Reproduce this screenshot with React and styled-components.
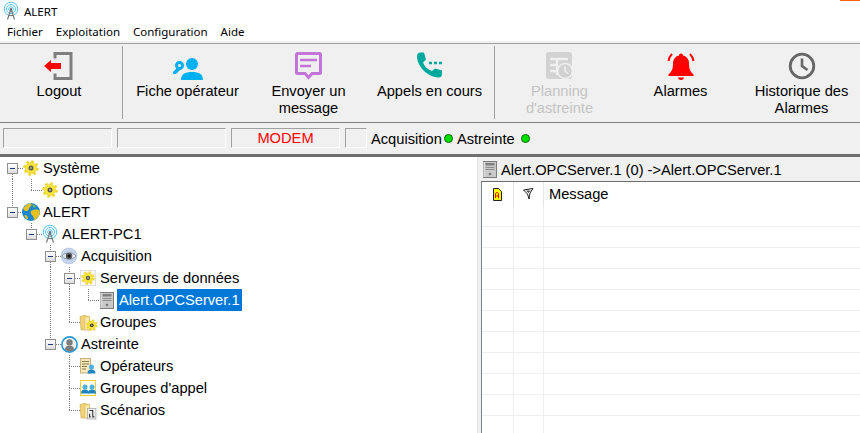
import React from 'react';
import styled, { createGlobalStyle } from 'styled-components';

const Global = createGlobalStyle`
  html, body {
    margin: 0;
    padding: 0;
    background: #fff;
  }
  * {
    box-sizing: border-box;
  }
`;

const Win = styled.div`
  width: 860px;
  height: 433px;
  overflow: hidden;
  display: flex;
  flex-direction: column;
  font-family: "Liberation Sans", Arial, sans-serif;
  font-size: 14.67px;
  color: #000;
  background: #fff;
`;

const TitleBar = styled.div`
  height: 22px;
  display: flex;
  align-items: center;
  padding-left: 3px;
  font-family: "Noto Sans", sans-serif;
  font-size: 11.5px;
`;

const TitleText = styled.span`
  margin-left: 5px;
`;

const CloseEdge = styled.div`
  align-self: flex-start;
  margin-left: auto;
  width: 20px;
  height: 1px;
  background: #f7630c;
`;

const MenuBar = styled.div`
  height: 19px;
  display: flex;
  align-items: center;
  gap: 13px;
  padding-left: 7px;
  font-family: "Noto Sans", sans-serif;
  font-size: 11.5px;
`;

const ToolBar = styled.div`
  height: 80px;
  flex: none;
  margin-top: 2px;
  display: flex;
  align-items: flex-start;
  padding-top: 2px;
  background: #f0f0f0;
  border-top: 1px solid #a0a0a0;
  border-bottom: 1px solid #808080;
  box-shadow: 0 -2px 0 #f0f0f0;
`;

const ToolButton = styled.div`
  flex: none;
  width: ${({ $w }) => $w || 121}px;
  padding-top: 6px;
  display: flex;
  flex-direction: column;
  align-items: center;
  text-align: center;
  line-height: 17px;
  color: ${({ $off }) => ($off ? '#c4c4c4' : '#000')};
`;

const ToolIcon = styled.div`
  height: 31px;
  width: 32px;
`;

const ToolSep = styled.div`
  flex: none;
  width: 1px;
  height: 73px;
  margin: 0 4px;
  background: #a0a0a0;
`;

const StatusBar = styled.div`
  height: 34px;
  flex: none;
  display: flex;
  align-items: center;
  gap: 5px;
  padding: 0 0 1px 3px;
  background: #f0f0f0;
  border-bottom: 3px solid #6e6e6e;
`;

const StatusBox = styled.div`
  flex: none;
  width: ${({ $w }) => $w || 109}px;
  height: 20px;
  display: flex;
  align-items: center;
  justify-content: center;
  color: #ff0000;
  border: 1px solid;
  border-color: #a0a0a0 #fff #fff #a0a0a0;
`;

const StatusText = styled.span`
  margin-left: ${({ $ml }) => $ml || 0}px;
  padding-top: 1px;
`;

const Led = styled.span`
  flex: none;
  width: 9px;
  height: 9px;
  margin-left: ${({ $ml }) => $ml || 0}px;
  border-radius: 50%;
  background: #00e000;
  border: 1px solid #0a6a0a;
`;

const Main = styled.div`
  flex: 1;
  display: flex;
  min-height: 0;
`;

const Tree = styled.div`
  flex: none;
  width: 477px;
  background: #fff;
`;

const Row = styled.div`
  height: 22px;
  display: flex;
`;

const Guide = styled.div`
  flex: none;
  width: 19px;
  height: 22px;
  ${({ $on }) => $on && `background: repeating-linear-gradient(to bottom, #7a7a7a 0 1px, transparent 1px 2px) 12px 0 / 1px 100% no-repeat;`}
`;

const vertical = 'repeating-linear-gradient(to bottom, #7a7a7a 0 1px, transparent 1px 2px)';
const across = 'repeating-linear-gradient(to right, #7a7a7a 0 1px, transparent 1px 2px) 12px 11px / 11px 1px no-repeat';

const lines = ({ $up, $down }) => {
  const layers = [across];
  if ($up) layers.push(`${vertical} 12px 0 / 1px 11px no-repeat`);
  if ($down) layers.push(`${vertical} 12px 11px / 1px 11px no-repeat`);
  return layers.join(', ');
};

const Link = styled.div`
  flex: none;
  width: 23px;
  height: 22px;
  display: flex;
  align-items: center;
  padding-left: 7px;
  background: ${lines};
`;

const Expander = styled.div`
  width: 11px;
  height: 11px;
  margin-top: 1px;
  display: flex;
  align-items: center;
  justify-content: center;
  border: 1px solid #919191;
  background: linear-gradient(#fff, #dcdcdc);

  &::before {
    content: '';
    width: 5px;
    height: 1px;
    background: #1f3a7a;
  }
`;

const NodeIcon = styled.div`
  flex: none;
  width: 16px;
  height: 22px;
  display: flex;
  align-items: center;
  justify-content: center;
`;

const IconFrame = styled.div`
  flex: none;
  width: 16px;
  height: 16px;
  border: 1px solid #dedede;
  background: #fafafa;
`;

const NodeLabel = styled.div`
  margin-left: 2px;
  padding: 0 2px;
  line-height: 22px;
  background: ${({ $sel }) => ($sel ? '#0078d7' : 'transparent')};
  color: ${({ $sel }) => ($sel ? '#fff' : '#000')};
`;

const Side = styled.div`
  flex: 1;
  display: flex;
  flex-direction: column;
  min-width: 0;
  background: #f0f0f0;
  border-left: 1px solid #e3e3e3;
`;

const SideHead = styled.div`
  height: 24px;
  flex: none;
  display: flex;
  align-items: center;
  gap: 4px;
  padding: 1px 0 0 5px;
  white-space: nowrap;
`;

const Grid = styled.div`
  flex: 1;
  margin-left: 3px;
  background: #fff;
  border-top: 1px solid #6e6e6e;
  border-left: 1px solid #7b8088;
`;

const GridHead = styled.div`
  height: 24px;
  display: flex;
`;

const HeadCell = styled.div`
  flex: ${({ $grow }) => ($grow ? 1 : 'none')};
  width: ${({ $w }) => $w || 0}px;
  height: 24px;
  display: flex;
  align-items: center;
  justify-content: ${({ $grow }) => ($grow ? 'flex-start' : 'center')};
  padding-left: ${({ $grow }) => ($grow ? 5 : 0)}px;
  border-right: ${({ $grow }) => ($grow ? 0 : '1px solid #e4e4e4')};
`;

const GridRow = styled.div`
  height: 21px;
  display: flex;
  border-bottom: 1px solid #eeeeee;
`;

const GridCell = styled.div`
  flex: none;
  width: ${({ $w }) => $w}px;
  border-right: 1px solid #eeeeee;
`;

const Pic = styled.svg`
  display: block;
  flex: none;
  overflow: visible;
`;

const Svg = ({ size = 16, w, h, box, children }) => (
  <Pic width={w || size} height={h || size} viewBox={box || `0 0 ${w || size} ${h || size}`}>
    {children}
  </Pic>
);

const GearShape = ({ hub = '#5f5c50' }) => (
  <>
    <circle cx="8" cy="8" r="5.600" fill="#f8e63a" stroke="#d8bf24" strokeWidth=".5" />
    <circle cx="8" cy="8" r="6.600" fill="none" stroke="#efd52a" strokeWidth="2.400" strokeDasharray="2.600 2.580" />
    <circle cx="8" cy="8" r="2.500" fill={hub} />
    <circle cx="8" cy="8" r="1" fill="#b3b0a2" />
  </>
);

const Antenna = () => (
  <Svg size={16}>
    <g fill="none" stroke="#56c2ea" strokeWidth="1">
      <circle cx="8" cy="6" r="2.300" />
      <circle cx="8" cy="6" r="4.500" />
      <circle cx="8" cy="6" r="6.800" />
    </g>
    <path d="M8 6 4.500 16.500M8 6l3.500 10.500M6 12.500h4" fill="none" stroke="#777" strokeWidth="1.200" />
    <circle cx="8" cy="6" r="1.100" fill="#666" />
  </Svg>
);

const Gear = () => (
  <Svg size={16} box="0 0 16 16">
    <GearShape />
  </Svg>
);

const GearFrame = () => (
  <IconFrame>
    <Svg size={14} box="0 0 16 16">
      <GearShape />
    </Svg>
  </IconFrame>
);

const Globe = () => (
  <Svg size={18} box="0 0 16 16">
    <circle cx="8" cy="8" r="8" fill="#1a86d0" />
    <path d="M1 5c2-3 4-4.500 7-4.800 1 1 .5 2.300-.5 2.800C6 4 6.500 5.500 5.500 6.500 4 8 2 7 1 5zM8 7c2-1 5-2 7.500-.5.500 2 .3 4-.8 5.500-1 .5-1.500 2-3 3-1.500 0-1-2-2-3.500C8.500 10 7 9 8 7zM2 10.500c1.500 0 3 1 3.500 3L4 14.500c-1-1-1.600-2.500-2-4z" fill="#e8c21c" />
    <path d="M9 1c1.500.2 2.500 1 3.500 2l-2 1.200z" fill="#7cc443" />
  </Svg>
);

const Eye = () => (
  <Svg size={16} box="0 0 16 16">
    <circle cx="8" cy="8" r="8" fill="#c3d3ec" stroke="#a6b9d8" strokeWidth=".5" />
    <path d="M1 8c3-4.200 11-4.200 14 0-3 4.200-11 4.200-14 0z" fill="#e9ecf2" stroke="#70798a" strokeWidth=".7" />
    <circle cx="8" cy="8" r="3.300" fill="#5b5d62" />
    <circle cx="8" cy="8" r="1.500" fill="#111" />
  </Svg>
);

const ServerBox = () => (
  <Svg w={14} h={17} box="0 0 14 17">
    <rect x=".5" y=".5" width="13" height="16" fill="#c9c9c9" stroke="#7c7c7c" />
    <rect x="2.500" y="2" width="9" height="2.500" fill="#808080" />
    <path d="M2.500 6.500h9M2.500 8.500h9" stroke="#8d8d8d" />
    <circle cx="7" cy="13" r="1.300" fill="#7a7a7a" />
    <path d="M1 1v15" stroke="#eeeeee" />
  </Svg>
);

const FolderGear = () => (
  <Svg size={17} box="0 0 16 16">
    <path d="M0 2.500 5 1l1 1h2l1 2v11H1z" fill="#f1d277" stroke="#c9a74a" strokeWidth=".6" />
    <path d="M4.500 3.500 9 2v13H4.500z" fill="#fbeaa8" stroke="#d3b257" strokeWidth=".5" />
    <g transform="translate(5.500 5) scale(.7)">
      <GearShape hub="#3d3d3d" />
    </g>
  </Svg>
);

const UserCircle = () => (
  <Svg size={17} box="0 0 16 16">
    <circle cx="8" cy="8" r="7.200" fill="#f2f2f2" stroke="#2a9ad6" strokeWidth="1.500" />
    <circle cx="8" cy="6" r="3" fill="#7e7e7e" />
    <path d="M3.500 13c.5-3 2-4 4.500-4s4 1 4.500 4a7 7 0 0 1-9 0z" fill="#7e7e7e" />
  </Svg>
);

const Person = ({ x, y }) => (
  <g transform={`translate(${x} ${y})`}>
    <circle cx="4" cy="2.500" r="2.500" fill="#4db1e6" />
    <path d="M0 9c0-3 1.500-4 4-4s4 1 4 4z" fill="#1d84c4" />
  </g>
);

const Operators = () => (
  <Svg size={16} box="0 0 16 16">
    <rect x=".5" y=".5" width="10" height="14.500" fill="#f5e8bd" stroke="#c8b27a" />
    <path d="M2 3.500h7M2 6h7M2 8.500h5M2 11h4" stroke="#8a7b4d" />
    <Person x="7.500" y="6.500" />
  </Svg>
);

const CallGroup = () => (
  <Svg size={16} box="0 0 16 16">
    <rect x=".5" y=".5" width="15" height="15" fill="#fffbe6" stroke="#e5cf3a" />
    <Person x="1" y="4.500" />
    <Person x="8" y="4.500" />
  </Svg>
);

const ScenarioFolder = () => (
  <Svg size={17} box="0 0 16 16">
    <path d="M0 2.500 5 1l1 1h2l1 2v11H1z" fill="#f1d277" stroke="#c9a74a" strokeWidth=".6" />
    <path d="M4.500 3.500 9 2v13H4.500z" fill="#fbeaa8" stroke="#d3b257" strokeWidth=".5" />
    <rect x="7" y="6" width="8" height="10" fill="#eeeeee" stroke="#9a9a9a" strokeWidth=".6" />
    <path d="M9 8h3v3M9 11v3h1M12 11v3h1.500" fill="none" stroke="#333" strokeWidth="1" />
  </Svg>
);

const Logout = () => (
  <Svg w={32} h={31} box="43 52 32 31">
    <path d="M55 58.500v-5h16v25H55v-5" fill="none" stroke="#7f7f7f" strokeWidth="3" />
    <path d="M44 66l7-6v3h10v6H51v3z" fill="#ff0000" />
  </Svg>
);

const UserKey = () => (
  <Svg w={32} h={31} box="171 52 32 31">
    <circle cx="191" cy="64" r="6" fill="#00b0f0" />
    <path d="M180 80c0-6 4-8 11-8s11 2 11 8z" fill="#00b0f0" />
    <circle cx="178.500" cy="65.500" r="3" fill="none" stroke="#00b0f0" strokeWidth="3" />
    <path d="M176 68 172 72v2h3l4-4z" fill="#00b0f0" />
  </Svg>
);

const Message = () => (
  <Svg w={32} h={31} box="293 52 32 31">
    <path d="M297.500 53.500h22a1 1 0 0 1 1 1v18a1 1 0 0 1-1 1H312l-3.500 4-3.500-4h-7.500a1 1 0 0 1-1-1v-18a1 1 0 0 1 1-1z" fill="none" stroke="#c274d8" strokeWidth="3" />
    <path d="M300 60h17M300 66h11" stroke="#c274d8" strokeWidth="2.400" />
  </Svg>
);

const Phone = () => (
  <Svg w={32} h={31} box="415 52 32 31">
    <path d="M418 56c0-2 1.500-3.500 3.500-3.500h3.500l2 7-3 3c1.500 4 4.500 7 9 8.500l3-2.500 7 2v4c0 2-1.500 3-3.500 3C428 77 418 66 418 56z" fill="#00a99d" />
    <path d="M430 63h3M435 63h3M440 63h3" stroke="#00a99d" strokeWidth="2.600" />
  </Svg>
);

const Planning = () => (
  <Svg w={32} h={31} box="543 52 32 31">
    <rect x="545" y="52" width="26" height="27" rx="3" fill="#d2d2d2" />
    <path d="M549 59h18M549 65h7M549 71h7M556 59v16" stroke="#f0f0f0" strokeWidth="2.400" />
    <circle cx="564" cy="71" r="7.500" fill="#d2d2d2" stroke="#f0f0f0" strokeWidth="1.600" />
    <path d="M564 66.500V71l3 2.500" fill="none" stroke="#f0f0f0" strokeWidth="1.600" />
  </Svg>
);

const AlarmBell = () => (
  <Svg w={32} h={31} box="665 52 32 31">
    <path d="M681 53.500c1.200 0 2 .8 2 2 4 1 6 4 6 8 0 5 1 8 4.500 11v1.500h-25v-1.500c3.500-3 4.500-6 4.500-11 0-4 2-7 6-8 0-1.200.8-2 2-2z" fill="#ff0000" />
    <path d="M678 77.500h6c0 1.500-1.300 2.500-3 2.500s-3-1-3-2.500z" fill="#ff0000" />
    <path d="M672 54c-2 2-3 4-3.500 7M690 54c2 2 3 4 3.500 7" fill="none" stroke="#ff0000" strokeWidth="2" />
  </Svg>
);

const Clock = () => (
  <Svg w={32} h={31} box="787 52 32 31">
    <circle cx="803" cy="66" r="11.800" fill="none" stroke="#666" strokeWidth="2.800" />
    <path d="M803 58.500V66l5.500 4" fill="none" stroke="#666" strokeWidth="2.600" />
  </Svg>
);

const DocAlert = () => (
  <Svg w={9} h={13} box="0 0 9 13">
    <path d="M.5.500h5l3 3v9h-8z" fill="#ffff00" stroke="#222" />
    <path d="M2.500 10V5.500l1.500-1 1.500 1V10M2.500 8h3" fill="none" stroke="#e00000" />
  </Svg>
);

const Funnel = () => (
  <Svg w={11} h={12} box="0 0 11 12">
    <path d="M.5 2 10 .5 7 5l-1 6-1.500-5z" fill="#fff" stroke="#222" />
    <path d="M3 2.500h4.500L5.500 5z" fill="#444" />
  </Svg>
);

const tools = [
  { label: 'Fiche opérateur', icon: <UserKey /> },
  { label: 'Envoyer un message', icon: <Message /> },
  { label: 'Appels en cours', icon: <Phone /> },
];

const moreTools = [
  { label: "Planning d'astreinte", icon: <Planning />, off: true },
  { label: 'Alarmes', icon: <AlarmBell /> },
  { label: 'Historique des Alarmes', icon: <Clock /> },
];

// guides : une entrée par niveau, true = trait vertical qui continue
const nodes = [
  { label: 'Système', icon: <Gear />, guides: [], open: true, down: true },
  { label: 'Options', icon: <Gear />, guides: [true], up: true },
  { label: 'ALERT', icon: <Globe />, guides: [], open: true, up: true },
  { label: 'ALERT-PC1', icon: <Antenna />, guides: [false], open: true, up: true },
  { label: 'Acquisition', icon: <Eye />, guides: [false, false], open: true, up: true, down: true },
  { label: 'Serveurs de données', icon: <GearFrame />, guides: [false, false, true], open: true, up: true, down: true },
  { label: 'Alert.OPCServer.1', icon: <ServerBox />, guides: [false, false, true, true], up: true, selected: true },
  { label: 'Groupes', icon: <FolderGear />, guides: [false, false, true], up: true },
  { label: 'Astreinte', icon: <UserCircle />, guides: [false, false], open: true, up: true },
  { label: 'Opérateurs', icon: <Operators />, guides: [false, false, false], up: true, down: true },
  { label: "Groupes d'appel", icon: <CallGroup />, guides: [false, false, false], up: true, down: true },
  { label: 'Scénarios', icon: <ScenarioFolder />, guides: [false, false, false], up: true },
];

const ToolItem = ({ tool }) => (
  <ToolButton $off={tool.off}>
    <ToolIcon>{tool.icon}</ToolIcon>
    {tool.label}
  </ToolButton>
);

const App = () => {
  return (
    <Win>
      <Global />
      <TitleBar>
        <Antenna />
        <TitleText>ALERT</TitleText>
        <CloseEdge />
      </TitleBar>
      <MenuBar>
        <span>Fichier</span>
        <span>Exploitation</span>
        <span>Configuration</span>
        <span>Aide</span>
      </MenuBar>
      <ToolBar>
        <ToolButton $w={118}>
          <ToolIcon><Logout /></ToolIcon>
          Logout
        </ToolButton>
        <ToolSep />
        {tools.map(tool => <ToolItem key={tool.label} tool={tool} />)}
        <ToolSep />
        {moreTools.map(tool => <ToolItem key={tool.label} tool={tool} />)}
      </ToolBar>
      <StatusBar>
        <StatusBox />
        <StatusBox />
        <StatusBox>MODEM</StatusBox>
        <StatusBox $w={22} />
        <StatusText $ml={-1}>Acquisition</StatusText>
        <Led $ml={-3} />
        <StatusText $ml={-1}>Astreinte</StatusText>
        <Led $ml={1} />
      </StatusBar>
      <Main>
        <Tree>
          {nodes.map(node => (
            <Row key={node.label}>
              {node.guides.map((on, i) => <Guide key={i} $on={on} />)}
              <Link $up={node.up} $down={node.down}>
                {node.open && <Expander />}
              </Link>
              <NodeIcon>{node.icon}</NodeIcon>
              <NodeLabel $sel={node.selected}>{node.label}</NodeLabel>
            </Row>
          ))}
        </Tree>
        <Side>
          <SideHead>
            <ServerBox />
            Alert.OPCServer.1 (0) -&gt;Alert.OPCServer.1
          </SideHead>
          <Grid>
            <GridHead>
              <HeadCell $w={32}><DocAlert /></HeadCell>
              <HeadCell $w={30}><Funnel /></HeadCell>
              <HeadCell $grow>Message</HeadCell>
            </GridHead>
            {Array.from({ length: 11 }, (_, i) => (
              <GridRow key={i}>
                <GridCell $w={32} />
                <GridCell $w={30} />
              </GridRow>
            ))}
          </Grid>
        </Side>
      </Main>
    </Win>
  );
};

export default App;
